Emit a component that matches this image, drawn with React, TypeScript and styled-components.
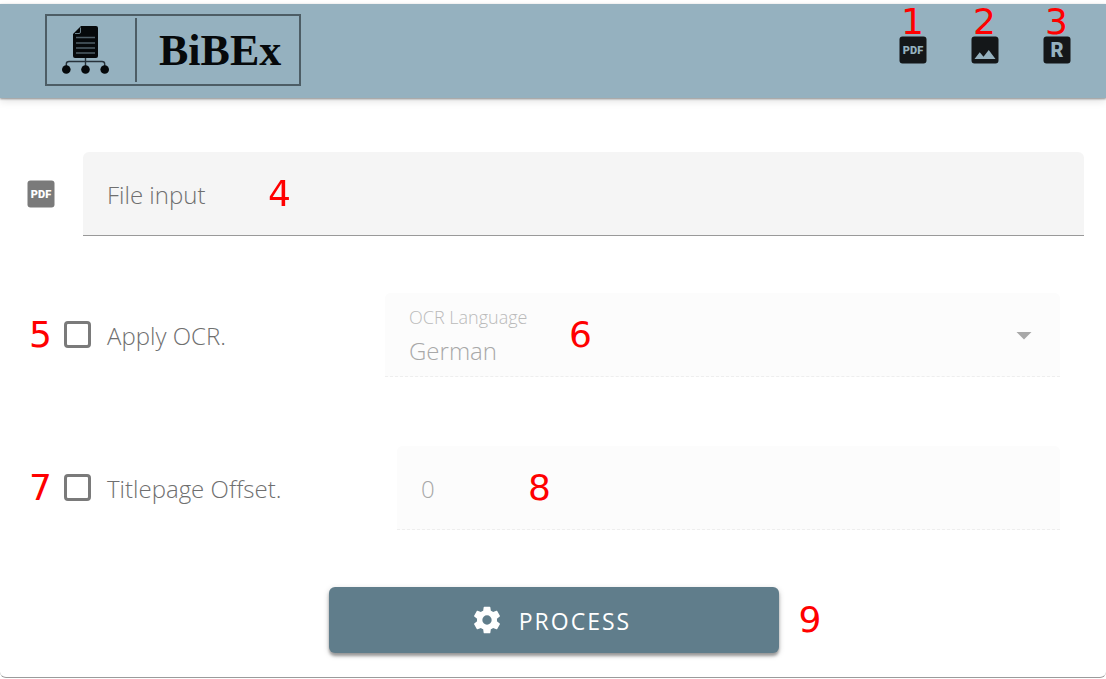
import React from "react";
import styled, { createGlobalStyle } from "styled-components";

const GlobalStyle = createGlobalStyle`
  *, *::before, *::after { box-sizing: border-box; }
  body {
    margin: 0;
    background: #fff;
    color: #6f6f6f;
    font-family: "Open Sans", "Noto Sans", sans-serif;
    font-size: 24px;
    font-weight: 300;
    line-height: 32px;
  }
`;

const Card = styled.div`
  margin-top: 4px;
  border-bottom: 1px solid #9b9b9b;
  border-radius: 0 0 6px 6px;
`;

const Header = styled.header`
  display: flex;
  align-items: center;
  justify-content: space-between;
  height: 94px;
  padding: 0 31px 2px 45px;
  background: #95b1bf;
  box-shadow: 0 1px 2px rgba(0, 0, 0, 0.4), 0 3px 8px rgba(0, 0, 0, 0.12);
`;

const Logo = styled.a`
  display: flex;
  align-items: center;
  height: 72px;
  padding: 0 18px 0 15px;
  border: 2px solid #4d5d65;
  color: #06090b;
  text-decoration: none;
`;

const LogoDrawing = styled.svg`
  width: 48px;
  height: 48px;
`;

const LogoDivider = styled.span`
  width: 2px;
  height: 64px;
  margin: 0 22px 0 25px;
  background: #4d5d65;
`;

const LogoName = styled.span`
  padding-top: 2px;
  font-family: "Liberation Serif", serif;
  font-size: 44px;
  font-weight: 700;
  line-height: 48px;
`;

const Actions = styled.nav`
  display: flex;
  gap: 36px;
`;

const Action = styled.div`
  position: relative;
`;

const IconButton = styled.button`
  display: block;
  padding: 0;
  border: 0;
  background: none;
  color: #141719;
  cursor: pointer;
`;

const FileIcon = styled.span`
  color: #7a7a7a;
`;

const Glyph = styled.svg<{ $size?: number }>`
  display: block;
  flex: none;
  width: ${(p) => p.$size ?? 36}px;
  height: ${(p) => p.$size ?? 36}px;
  fill: currentColor;
`;

const GlyphText = styled.text<{ $size: number; $fill: string }>`
  font-family: Roboto, sans-serif;
  font-size: ${(p) => p.$size}px;
  font-weight: 900;
  text-anchor: middle;
  fill: ${(p) => p.$fill};
`;

const Mark = styled.span`
  width: 23px;
  color: #f00;
  font-family: "DejaVu Sans", sans-serif;
  font-size: 36px;
  font-weight: 400;
  line-height: 36px;
  pointer-events: none;
`;

const MarkAbove = styled(Mark)`
  position: absolute;
  bottom: 28px;
  left: 6px;
`;

const MarkOver = styled(Mark)<{ $left: number }>`
  position: absolute;
  top: 24px;
  left: ${(p) => p.$left}px;
`;

const Form = styled.form`
  padding: 54px 22px 24px 23px;
`;

const FileRow = styled.div`
  display: flex;
  align-items: center;
  gap: 24px;
  margin-bottom: 57px;
`;

const FileField = styled.label`
  position: relative;
  display: flex;
  flex: 1;
  align-items: center;
  height: 84px;
  padding: 2px 24px 0;
  border-bottom: 1px solid #999;
  border-radius: 6px 6px 0 0;
  background: #f5f5f5;
  cursor: pointer;
`;

const FileInput = styled.input`
  position: absolute;
  inset: 0;
  width: 100%;
  opacity: 0;
  cursor: pointer;
`;

const OptionRow = styled.div<{ $gap: number; $inset?: number }>`
  display: grid;
  grid-template-columns: ${(p) => 356 + (p.$inset ?? 0)}px 1fr;
  align-items: center;
  margin: 0 24px ${(p) => p.$gap}px 6px;
`;

const Option = styled.div`
  display: flex;
  align-items: center;
`;

const OptionLabel = styled.label`
  display: flex;
  align-items: center;
  gap: 16px;
  margin-left: 12px;
  padding-top: 2px;
  cursor: pointer;
`;

const Checkbox = styled.input`
  appearance: none;
  width: 27px;
  height: 27px;
  margin: 0 0 3px;
  border: 3px solid #7a7a7a;
  border-radius: 4px;
  &:checked { background: #607d8b; }
`;

const DisabledField = styled.div`
  position: relative;
  display: flex;
  flex-direction: column;
  justify-content: center;
  height: 84px;
  padding: 0 24px;
  border-bottom: 1px dashed #eee;
  border-radius: 6px 6px 0 0;
  background: #fcfcfc;
  color: #a8a8a8;
`;

const Caption = styled.label`
  padding-top: 8px;
  color: #bababa;
  font-size: 18px;
  line-height: 24px;
`;

const controlStyle = `
  appearance: none;
  width: 100%;
  margin: 0;
  padding: 0;
  border: 0;
  background: none;
  color: inherit;
  font: inherit;
  opacity: 1;
`;

const Select = styled.select`
  ${controlStyle}
  height: 44px;
`;

const NumberInput = styled.input`
  ${controlStyle}
  height: 34px;
  padding-top: 2px;
`;

const Arrow = styled(Glyph)`
  position: absolute;
  top: 24px;
  right: 18px;
  color: #a8a8a8;
  pointer-events: none;
`;

const SubmitRow = styled.div`
  display: grid;
  grid-template-columns: 1fr 450px 1fr;
  align-items: center;
  column-gap: 20px;
`;

const ProcessButton = styled.button`
  display: flex;
  grid-column: 2;
  align-items: center;
  justify-content: center;
  gap: 16px;
  height: 66px;
  padding: 0 5px 0 0;
  border: 0;
  border-radius: 6px;
  background: #607d8b;
  box-shadow: 0 3px 3px rgba(0, 0, 0, 0.32), 0 2px 6px rgba(0, 0, 0, 0.18);
  color: #fff;
  font: inherit;
  font-size: 23px;
  font-weight: 400;
  letter-spacing: 2px;
  cursor: pointer;
`;

const ProcessLabel = styled.span`
  padding-top: 2px;
`;

type LetterBoxProps = { text: string; size: number; y: number; hole: string };

const LetterBox = ({ text, size, y, hole }: LetterBoxProps) => (
  <Glyph viewBox="0 0 36 36" aria-hidden="true">
    <rect x="4.5" y="4.5" width="27" height="27" rx="3" />
    <GlyphText x="18" y={y} $size={size} $fill={hole}>{text}</GlyphText>
  </Glyph>
);

const ImageIcon = () => (
  <Glyph viewBox="0 0 24 24" aria-hidden="true">
    <path d="M8.5,13.5L11,16.5L14.5,12L19,18H5M21,19V5C21,3.89 20.1,3 19,3H5A2,2 0 0,0 3,5V19A2,2 0 0,0 5,21H19A2,2 0 0,0 21,19Z" />
  </Glyph>
);

const CogIcon = () => (
  <Glyph $size={32} viewBox="0 0 24 24" aria-hidden="true">
    <path d="M12,15.5A3.5,3.5 0 0,1 8.5,12A3.5,3.5 0 0,1 12,8.5A3.5,3.5 0 0,1 15.5,12A3.5,3.5 0 0,1 12,15.5M19.43,12.97C19.47,12.65 19.5,12.33 19.5,12C19.5,11.67 19.47,11.34 19.43,11L21.54,9.37C21.73,9.22 21.78,8.95 21.66,8.73L19.66,5.27C19.54,5.05 19.27,4.96 19.05,5.05L16.56,6.05C16.04,5.66 15.5,5.32 14.87,5.07L14.5,2.42C14.46,2.18 14.25,2 14,2H10C9.75,2 9.54,2.18 9.5,2.42L9.13,5.07C8.5,5.32 7.96,5.66 7.44,6.05L4.95,5.05C4.73,4.96 4.46,5.05 4.34,5.27L2.34,8.73C2.21,8.95 2.27,9.22 2.46,9.37L4.57,11C4.53,11.34 4.5,11.67 4.5,12C4.5,12.33 4.53,12.65 4.57,12.97L2.46,14.63C2.27,14.78 2.21,15.05 2.34,15.27L4.34,18.73C4.46,18.95 4.73,19.03 4.95,18.95L7.44,17.94C7.96,18.34 8.5,18.68 9.13,18.93L9.5,21.58C9.54,21.82 9.75,22 10,22H14C14.25,22 14.46,21.82 14.5,21.58L14.87,18.93C15.5,18.67 16.04,18.34 16.56,17.94L19.05,18.95C19.27,19.03 19.54,18.95 19.66,18.73L21.66,15.27C21.78,15.05 21.73,14.78 21.54,14.63L19.43,12.97Z" />
  </Glyph>
);

const LogoMark = () => (
  <LogoDrawing viewBox="0 0 48 48" aria-hidden="true">
    <path d="M19 0H34Q36 0 36 2V30Q36 32 34 32H13Q11 32 11 30V8Z" fill="#06090b" />
    <path d="M13 7.5H17Q18.5 7.5 18.5 6V1.5" fill="none" stroke="#6d828d" strokeWidth="1" />
    <path d="M14 11.5H33M14 17H33M14 22H33M14 27H33" stroke="#4f5f68" strokeWidth="1.4" />
    <path d="M23.5 32V43M4.3 43V38Q4.3 35.5 7 35.5H40Q42.7 35.5 42.7 38V43" fill="none" stroke="#27323a" strokeWidth="1.4" />
    <g fill="#06090b">
      <circle cx="4.3" cy="43.5" r="4.3" />
      <circle cx="23.5" cy="43.5" r="4.3" />
      <circle cx="42.7" cy="43.5" r="4.3" />
    </g>
  </LogoDrawing>
);

export default function App() {
  return (
    <>
      <GlobalStyle />
      <Card>
        <Header>
          <Logo href="#">
            <LogoMark />
            <LogoDivider />
            <LogoName>BiBEx</LogoName>
          </Logo>
          <Actions>
            <Action>
              <IconButton type="button" aria-label="PDF">
                <LetterBox text="PDF" size={11} y={22} hole="#95b1bf" />
              </IconButton>
              <MarkAbove>1</MarkAbove>
            </Action>
            <Action>
              <IconButton type="button" aria-label="Image"><ImageIcon /></IconButton>
              <MarkAbove>2</MarkAbove>
            </Action>
            <Action>
              <IconButton type="button" aria-label="R">
                <LetterBox text="R" size={20} y={25} hole="#95b1bf" />
              </IconButton>
              <MarkAbove>3</MarkAbove>
            </Action>
          </Actions>
        </Header>
        <Form onSubmit={(e: React.FormEvent) => e.preventDefault()}>
          <FileRow>
            <FileIcon>
              <LetterBox text="PDF" size={11} y={22} hole="#fff" />
            </FileIcon>
            <FileField>
              File input
              <FileInput type="file" accept="application/pdf" />
              <MarkOver $left={185}>4</MarkOver>
            </FileField>
          </FileRow>
          <OptionRow $gap={69}>
            <Option>
              <Mark>5</Mark>
              <OptionLabel><Checkbox type="checkbox" />Apply OCR.</OptionLabel>
            </Option>
            <DisabledField>
              <Caption htmlFor="language">OCR Language</Caption>
              <Select id="language" disabled defaultValue="German">
                <option>German</option>
              </Select>
              <Arrow viewBox="0 0 24 24" aria-hidden="true"><path d="M7,10L12,15L17,10H7Z" /></Arrow>
              <MarkOver $left={184}>6</MarkOver>
            </DisabledField>
          </OptionRow>
          <OptionRow $gap={57} $inset={12}>
            <Option>
              <Mark>7</Mark>
              <OptionLabel><Checkbox type="checkbox" />Titlepage Offset.</OptionLabel>
            </Option>
            <DisabledField>
              <NumberInput type="text" inputMode="numeric" aria-label="Titlepage Offset" disabled defaultValue="0" />
              <MarkOver $left={131}>8</MarkOver>
            </DisabledField>
          </OptionRow>
          <SubmitRow>
            <ProcessButton type="submit"><CogIcon /><ProcessLabel>PROCESS</ProcessLabel></ProcessButton>
            <Mark>9</Mark>
          </SubmitRow>
        </Form>
      </Card>
    </>
  );
}
